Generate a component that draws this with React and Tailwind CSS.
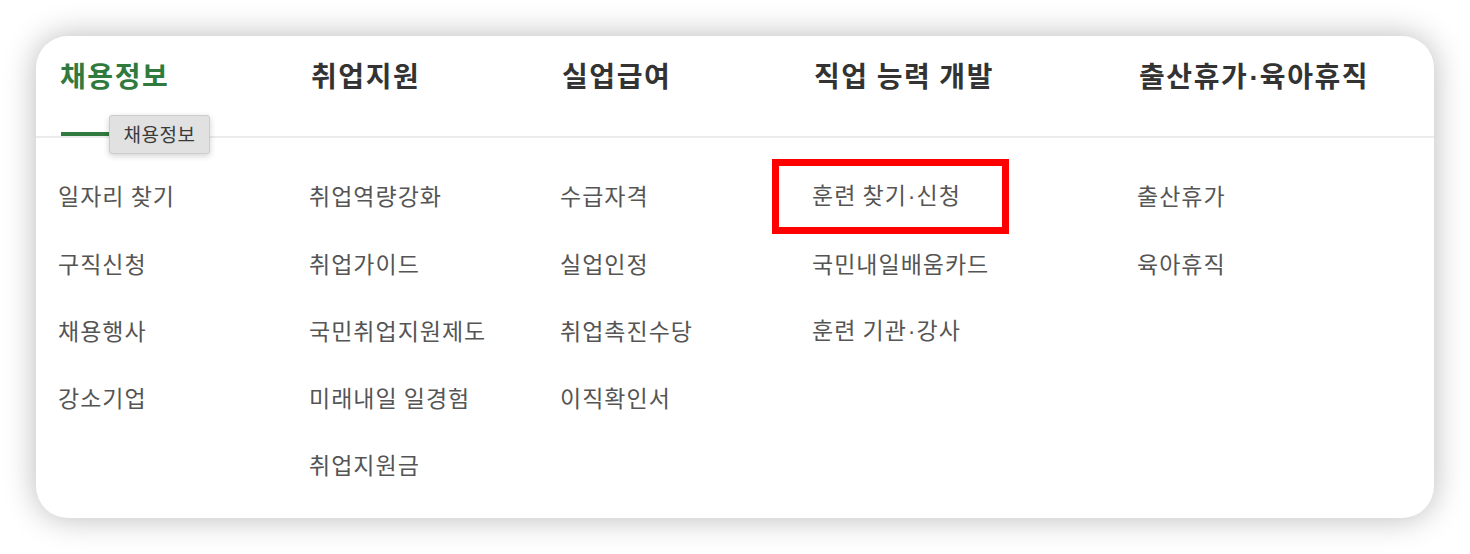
import React from "react";

const Dot = () => (
  <span className="tracking-[0px] mx-[1px]" style={{ fontFamily: '"Liberation Sans", sans-serif' }}>·</span>
);

const withDot = (s) => {
  const parts = s.split("·");
  return parts.map((p, i) => (
    <React.Fragment key={i}>
      {i > 0 && <Dot />}
      {p}
    </React.Fragment>
  ));
};

const cols = [
  { title: "채용정보", items: ["일자리 찾기", "구직신청", "채용행사", "강소기업"] },
  { title: "취업지원", items: ["취업역량강화", "취업가이드", "국민취업지원제도", "미래내일 일경험", "취업지원금"] },
  { title: "실업급여", items: ["수급자격", "실업인정", "취업촉진수당", "이직확인서"] },
  { title: "직업 능력 개발", items: ["훈련 찾기·신청", "국민내일배움카드", "훈련 기관·강사"] },
  { title: "출산휴가·육아휴직", items: ["출산휴가", "육아휴직"] },
];

const grid = "grid grid-cols-[251px_251px_252px_325px_1fr] pl-[24px]";

export default function App() {
  return (
    <div className="w-[1470px] h-[554px] bg-white pt-9 px-9" style={{ fontFamily: '"Noto Sans CJK KR", "Noto Sans", sans-serif' }}>
      <div className="h-[482px] bg-white rounded-[32px] shadow-[0_0_32px_rgba(0,0,0,0.28)]">
        <div className={`${grid} h-[102px] border-b-2 border-[#ebebeb]`}>
          {cols.map((c, i) => (
            <div key={i} className="relative flex flex-col">
              <div className={`pt-[18px] text-[28px] leading-[42px] font-bold tracking-[1.6px] whitespace-nowrap ${i === 0 ? "text-[#2f7a3c]" : "text-[#333333]"}`}>
                {withDot(c.title)}
              </div>
              {i === 0 && (
                <>
                  <div className="absolute left-[1px] top-[96px] w-[110px] h-[4px] bg-[#2f7a3c]" />
                  <div className="absolute left-[49px] top-[79px] w-[101px] h-[39px] flex items-center justify-center bg-[#e1e1e1] border border-[#cccccc] rounded-[3px] shadow-[0_2px_6px_rgba(0,0,0,0.18)] text-[19px] tracking-[0.5px] text-[#3a3a3a] z-10">
                    채용정보
                  </div>
                </>
              )}
            </div>
          ))}
        </div>
        <div className={`${grid} pt-[24px]`}>
          {cols.map((c, i) => (
            <div key={i} className="flex flex-col">
              {c.items.map((it, j) => (
                <div key={j} className="relative h-[67.25px] flex items-center text-[23px] text-[#555555] tracking-[1px] whitespace-nowrap">
                  <span className="-ml-[2px]">{withDot(it)}</span>
                  {i === 3 && j === 0 && (
                    <div className="absolute left-[-42px] top-[-3px] w-[237px] h-[75px] border-[7px] border-[#ff0000]" />
                  )}
                </div>
              ))}
            </div>
          ))}
        </div>
      </div>
    </div>
  );
}
